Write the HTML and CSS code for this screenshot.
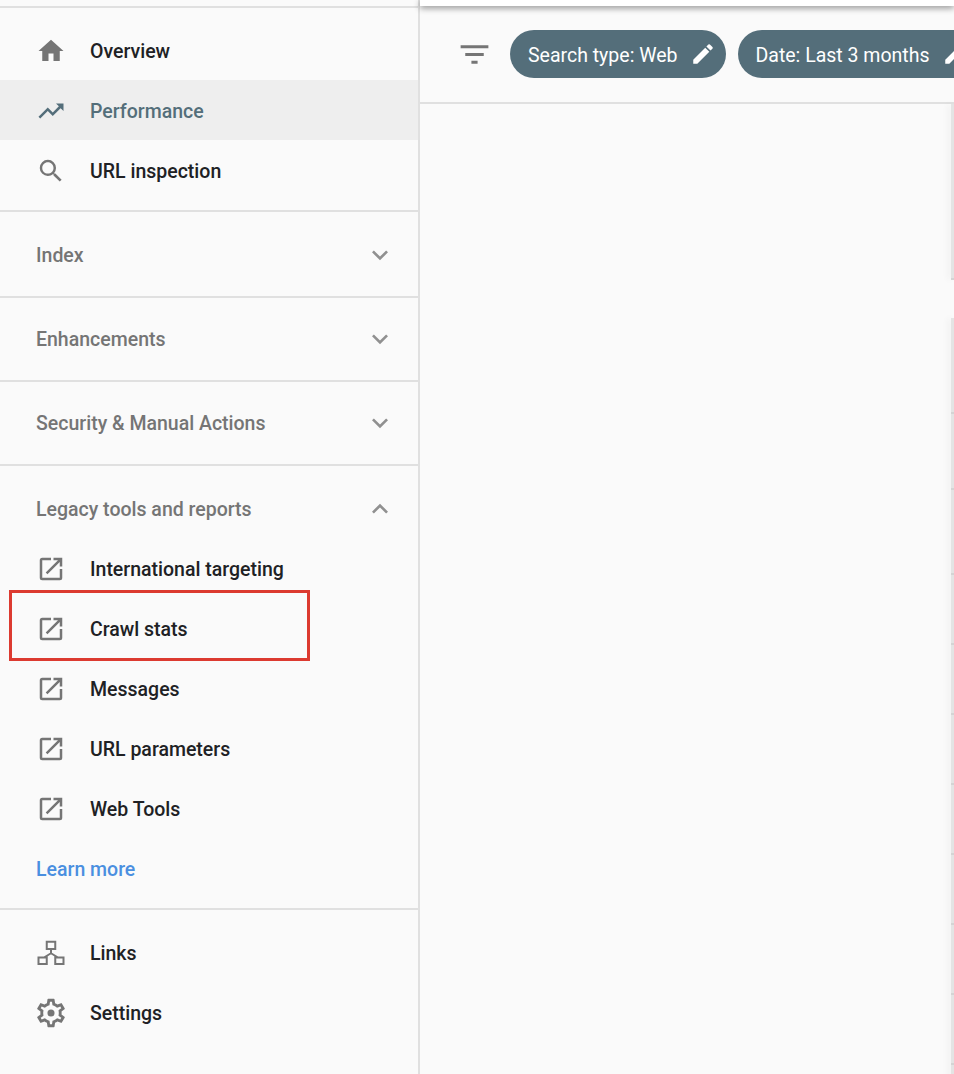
FILE: index.html
```html
<!DOCTYPE html>
<html lang="en">
<head>
    <meta charset="UTF-8">
    <meta name="viewport" content="width=device-width, initial-scale=1.0">
    <title>Search Console</title>
    <link rel="stylesheet" href="styles.css">
</head>
<body>
    <div class="page">
        <nav class="sidebar">
            <div class="group group-top">
                <a class="item"><svg class="icon" viewBox="0 0 24 24"><path d="M10 20v-6h4v6h5v-8h3L12 3 2 12h3v8z"/></svg>Overview</a>
                <a class="item active"><svg class="icon" viewBox="0 0 24 24"><path d="M16 6l2.29 2.29-4.88 4.88-4-4L2 16.59 3.41 18l6-6 4 4 6.3-6.29L22 12V6z"/></svg>Performance</a>
                <a class="item"><svg class="icon" viewBox="0 0 24 24"><path d="M15.5 14h-.79l-.28-.27A6.47 6.47 0 0 0 16 9.5 6.5 6.5 0 1 0 9.5 16c1.61 0 3.09-.59 4.23-1.57l.27.28v.79l5 4.99L20.49 19l-4.99-5zm-6 0C7.01 14 5 11.99 5 9.5S7.01 5 9.5 5 14 7.01 14 9.5 11.99 14 9.5 14z"/></svg>URL inspection</a>
            </div>
            <div class="section section-first"><span>Index</span><svg class="chevron" viewBox="0 0 24 24"><path d="M16.59 8.59L12 13.17 7.41 8.59 6 10l6 6 6-6z"/></svg></div>
            <div class="section"><span>Enhancements</span><svg class="chevron" viewBox="0 0 24 24"><path d="M16.59 8.59L12 13.17 7.41 8.59 6 10l6 6 6-6z"/></svg></div>
            <div class="section"><span>Security &amp; Manual Actions</span><svg class="chevron" viewBox="0 0 24 24"><path d="M16.59 8.59L12 13.17 7.41 8.59 6 10l6 6 6-6z"/></svg></div>
            <div class="group group-legacy">
                <div class="section-head"><span>Legacy tools and reports</span><svg class="chevron" viewBox="0 0 24 24"><path d="M12 8l-6 6 1.41 1.41L12 10.83l4.59 4.58L18 14z"/></svg></div>
                <a class="item"><svg class="icon" viewBox="0 0 24 24"><path d="M19 19H5V5h7V3H5a2 2 0 0 0-2 2v14a2 2 0 0 0 2 2h14a2 2 0 0 0 2-2v-7h-2v7zM14 3v2h3.59l-9.83 9.83 1.41 1.41L19 6.41V10h2V3h-7z"/></svg>International targeting</a>
                <a class="item marked"><svg class="icon" viewBox="0 0 24 24"><path d="M19 19H5V5h7V3H5a2 2 0 0 0-2 2v14a2 2 0 0 0 2 2h14a2 2 0 0 0 2-2v-7h-2v7zM14 3v2h3.59l-9.83 9.83 1.41 1.41L19 6.41V10h2V3h-7z"/></svg>Crawl stats</a>
                <a class="item"><svg class="icon" viewBox="0 0 24 24"><path d="M19 19H5V5h7V3H5a2 2 0 0 0-2 2v14a2 2 0 0 0 2 2h14a2 2 0 0 0 2-2v-7h-2v7zM14 3v2h3.59l-9.83 9.83 1.41 1.41L19 6.41V10h2V3h-7z"/></svg>Messages</a>
                <a class="item"><svg class="icon" viewBox="0 0 24 24"><path d="M19 19H5V5h7V3H5a2 2 0 0 0-2 2v14a2 2 0 0 0 2 2h14a2 2 0 0 0 2-2v-7h-2v7zM14 3v2h3.59l-9.83 9.83 1.41 1.41L19 6.41V10h2V3h-7z"/></svg>URL parameters</a>
                <a class="item"><svg class="icon" viewBox="0 0 24 24"><path d="M19 19H5V5h7V3H5a2 2 0 0 0-2 2v14a2 2 0 0 0 2 2h14a2 2 0 0 0 2-2v-7h-2v7zM14 3v2h3.59l-9.83 9.83 1.41 1.41L19 6.41V10h2V3h-7z"/></svg>Web Tools</a>
                <a class="learn">Learn more</a>
            </div>
            <div class="group group-bottom">
                <a class="item"><svg class="icon icon-line" viewBox="0 0 24 24"><path d="M8.6 3h6.8v5.8H8.6zM2 15.6h6.6v5.2H2zM15.4 15.6H22v5.2h-6.6zM12 8.8v3.4M12 12.2l-5.6 3.4M12 12.2l5.6 3.4"/></svg>Links</a>
                <a class="item"><svg class="icon icon-gear" viewBox="0 0 24 24"><path d="M19.43 12.98c.04-.32.07-.64.07-.98s-.03-.66-.07-.98l2.11-1.65a.5.5 0 0 0 .12-.64l-2-3.46a.5.5 0 0 0-.61-.22l-2.49 1a7.3 7.3 0 0 0-1.69-.98l-.38-2.65A.49.49 0 0 0 14 2h-4a.49.49 0 0 0-.49.42l-.38 2.65c-.61.25-1.17.59-1.69.98l-2.49-1a.49.49 0 0 0-.61.22l-2 3.46a.49.49 0 0 0 .12.64l2.11 1.65c-.04.32-.07.65-.07.98s.03.66.07.98l-2.11 1.65a.5.5 0 0 0-.12.64l2 3.46c.12.22.39.3.61.22l2.49-1c.52.4 1.08.73 1.69.98l.38 2.65c.03.24.24.42.49.42h4c.25 0 .46-.18.49-.42l.38-2.65c.61-.25 1.17-.59 1.69-.98l2.49 1c.23.09.49 0 .61-.22l2-3.46a.5.5 0 0 0-.12-.64l-2.11-1.65zM17.45 11.27c.04.31.05.52.05.73s-.02.43-.05.73l-.14 1.13.89.7 1.08.84-.7 1.21-1.27-.51-1.04-.42-.9.68c-.43.32-.84.56-1.25.73l-1.06.43-.16 1.13-.2 1.35h-1.4l-.19-1.35-.16-1.13-1.06-.43c-.43-.18-.83-.41-1.23-.71l-.91-.7-1.06.43-1.27.51-.7-1.21 1.08-.84.89-.7-.14-1.13c-.03-.31-.05-.54-.05-.74s.02-.43.05-.73l.14-1.13-.89-.7-1.08-.84.7-1.21 1.27.51 1.04.42.9-.68c.43-.32.84-.56 1.25-.73l1.06-.43.16-1.13.2-1.35h1.39l.19 1.35.16 1.13 1.06.43c.43.18.83.41 1.23.71l.91.7 1.06-.43 1.27-.51.7 1.21-1.07.85-.89.7.14 1.13zM12 9.5a2.5 2.5 0 1 0 0 5 2.5 2.5 0 0 0 0-5z"/></svg>Settings</a>
            </div>
        </nav>
        <main class="main">
            <div class="topbar"></div>
            <div class="filters">
                <svg class="filter-icon" viewBox="0 0 24 24"><path d="M10 18h4v-2h-4v2zM3 6v2h18V6H3zm3 7h12v-2H6v2z"/></svg>
                <span class="chip">Search type: Web<svg class="pencil" viewBox="0 0 24 24"><path d="M3 17.25V21h3.75L17.81 9.94l-3.75-3.75L3 17.25zM20.71 7.04a1 1 0 0 0 0-1.41l-2.34-2.34a1 1 0 0 0-1.41 0l-1.83 1.83 3.75 3.75 1.83-1.83z"/></svg></span>
                <span class="chip">Date: Last 3 months<svg class="pencil" viewBox="0 0 24 24"><path d="M3 17.25V21h3.75L17.81 9.94l-3.75-3.75L3 17.25zM20.71 7.04a1 1 0 0 0 0-1.41l-2.34-2.34a1 1 0 0 0-1.41 0l-1.83 1.83 3.75 3.75 1.83-1.83z"/></svg></span>
            </div>
            <div class="content">
                <div class="card card-chart"></div>
                <div class="card card-table">
                    <div class="row row-head"></div>
                    <div class="row row-tabs"></div>
                    <div class="row row-first"></div>
                    <div class="row"></div>
                    <div class="row"></div>
                    <div class="row"></div>
                    <div class="row"></div>
                    <div class="row"></div>
                    <div class="row"></div>
                    <div class="row"></div>
                    <div class="row"></div>
                </div>
            </div>
        </main>
    </div>
</body>
</html>
```

FILE: styles.css
```css
*, *::after {
    box-sizing: border-box;
}

html, body {
    height: 100%;
}

body {
    margin: 0;
    font-family: Roboto, "Liberation Sans", sans-serif;
    background-color: #fafafa;
    overflow: hidden;
}

.page {
    display: flex;
    height: 1074px;
    width: 954px;
    overflow: hidden;
}

.sidebar {
    width: 420px;
    flex-shrink: 0;
    padding-top: 6px;
    border-right: 2px solid #e0e0e0;
    background-color: #fafafa;
}

.group {
    border-bottom: 2px solid #e0e0e0;
}

.group-top {
    border-top: 2px solid #e0e0e0;
    padding: 12px 0 10px;
}

.group-top .item {
    padding-top: 2px;
}

.group-legacy {
    padding: 13px 0 9px;
}

.group-bottom {
    border-bottom: none;
    padding-top: 13px;
}

.item {
    display: flex;
    align-items: center;
    height: 60px;
    padding-left: 36px;
    font-size: 19.5px;
    font-weight: 500;
    color: #202124;
    position: relative;
}

.item.active {
    background-color: #eeeeee;
    color: #546e7a;
}

.item.active .icon {
    fill: #546e7a;
}

/* red box drawn on the screenshot */
.item.marked::after {
    content: "";
    position: absolute;
    left: 9px;
    top: -9px;
    width: 301px;
    height: 71px;
    border: 3px solid #dc3a30;
}

.icon {
    width: 30px;
    height: 30px;
    margin-right: 24px;
    fill: #757575;
    flex-shrink: 0;
}

.icon-line {
    fill: none;
    stroke: #757575;
    stroke-width: 1.6;
}

.icon-gear {
    width: 34px;
    height: 34px;
    margin-left: -2px;
    margin-right: 22px;
}

.section {
    display: flex;
    align-items: center;
    justify-content: space-between;
    height: 84px;
    padding: 0 22px 0 36px;
    font-size: 19.5px;
    font-weight: 500;
    color: #757575;
    border-bottom: 2px solid #e0e0e0;
}

.section-first {
    height: 86px;
    padding-top: 2px;
}

.section-head {
    display: flex;
    align-items: center;
    justify-content: space-between;
    height: 60px;
    padding: 0 22px 0 36px;
    font-size: 19.5px;
    font-weight: 500;
    color: #757575;
}

.chevron {
    width: 32px;
    height: 32px;
    fill: #909090;
}

.learn {
    display: flex;
    align-items: center;
    height: 60px;
    padding-left: 36px;
    font-size: 19.5px;
    font-weight: 500;
    color: #4a8fe0;
}

.main {
    flex: 1;
    min-width: 0;
}

.topbar {
    height: 6px;
    background-color: #fff;
    box-shadow: 0 2px 6px rgba(0, 0, 0, 0.45);
    position: relative;
}

.filters {
    display: flex;
    align-items: center;
    height: 98px;
    padding: 0 0 0 36px;
    gap: 12px;
    border-bottom: 2px solid #e0e0e0;
    white-space: nowrap;
    overflow: hidden;
}

.filter-icon {
    width: 37px;
    height: 37px;
    fill: #757575;
    flex-shrink: 0;
    margin-right: 5px;
}

.chip {
    display: inline-flex;
    align-items: center;
    height: 48px;
    padding: 2px 10px 0 18px;
    border-radius: 24px;
    background-color: #546e7a;
    color: #fff;
    font-size: 19.5px;
    flex-shrink: 0;
}

.pencil {
    width: 26px;
    height: 26px;
    margin-top: -2px;
    margin-left: 12px;
    fill: #fff;
}

.content {
    padding-left: 531px;
}

.card {
    height: 3px;
    background-color: #e4e4e4;
    box-shadow: -3px 0 6px rgba(0, 0, 0, 0.06);
}

.card-chart {
    height: 176px;
    border-bottom: 2px solid #d4d4d4;
    margin-bottom: 38px;
}

.card-table {
    height: auto;
}

.row {
    height: 70px;
    border-bottom: 2px solid #d4d4d4;
}

.row-head {
    height: 96px;
}

.row-tabs {
    height: 76px;
}

.row-first {
    height: 85px;
}
```
